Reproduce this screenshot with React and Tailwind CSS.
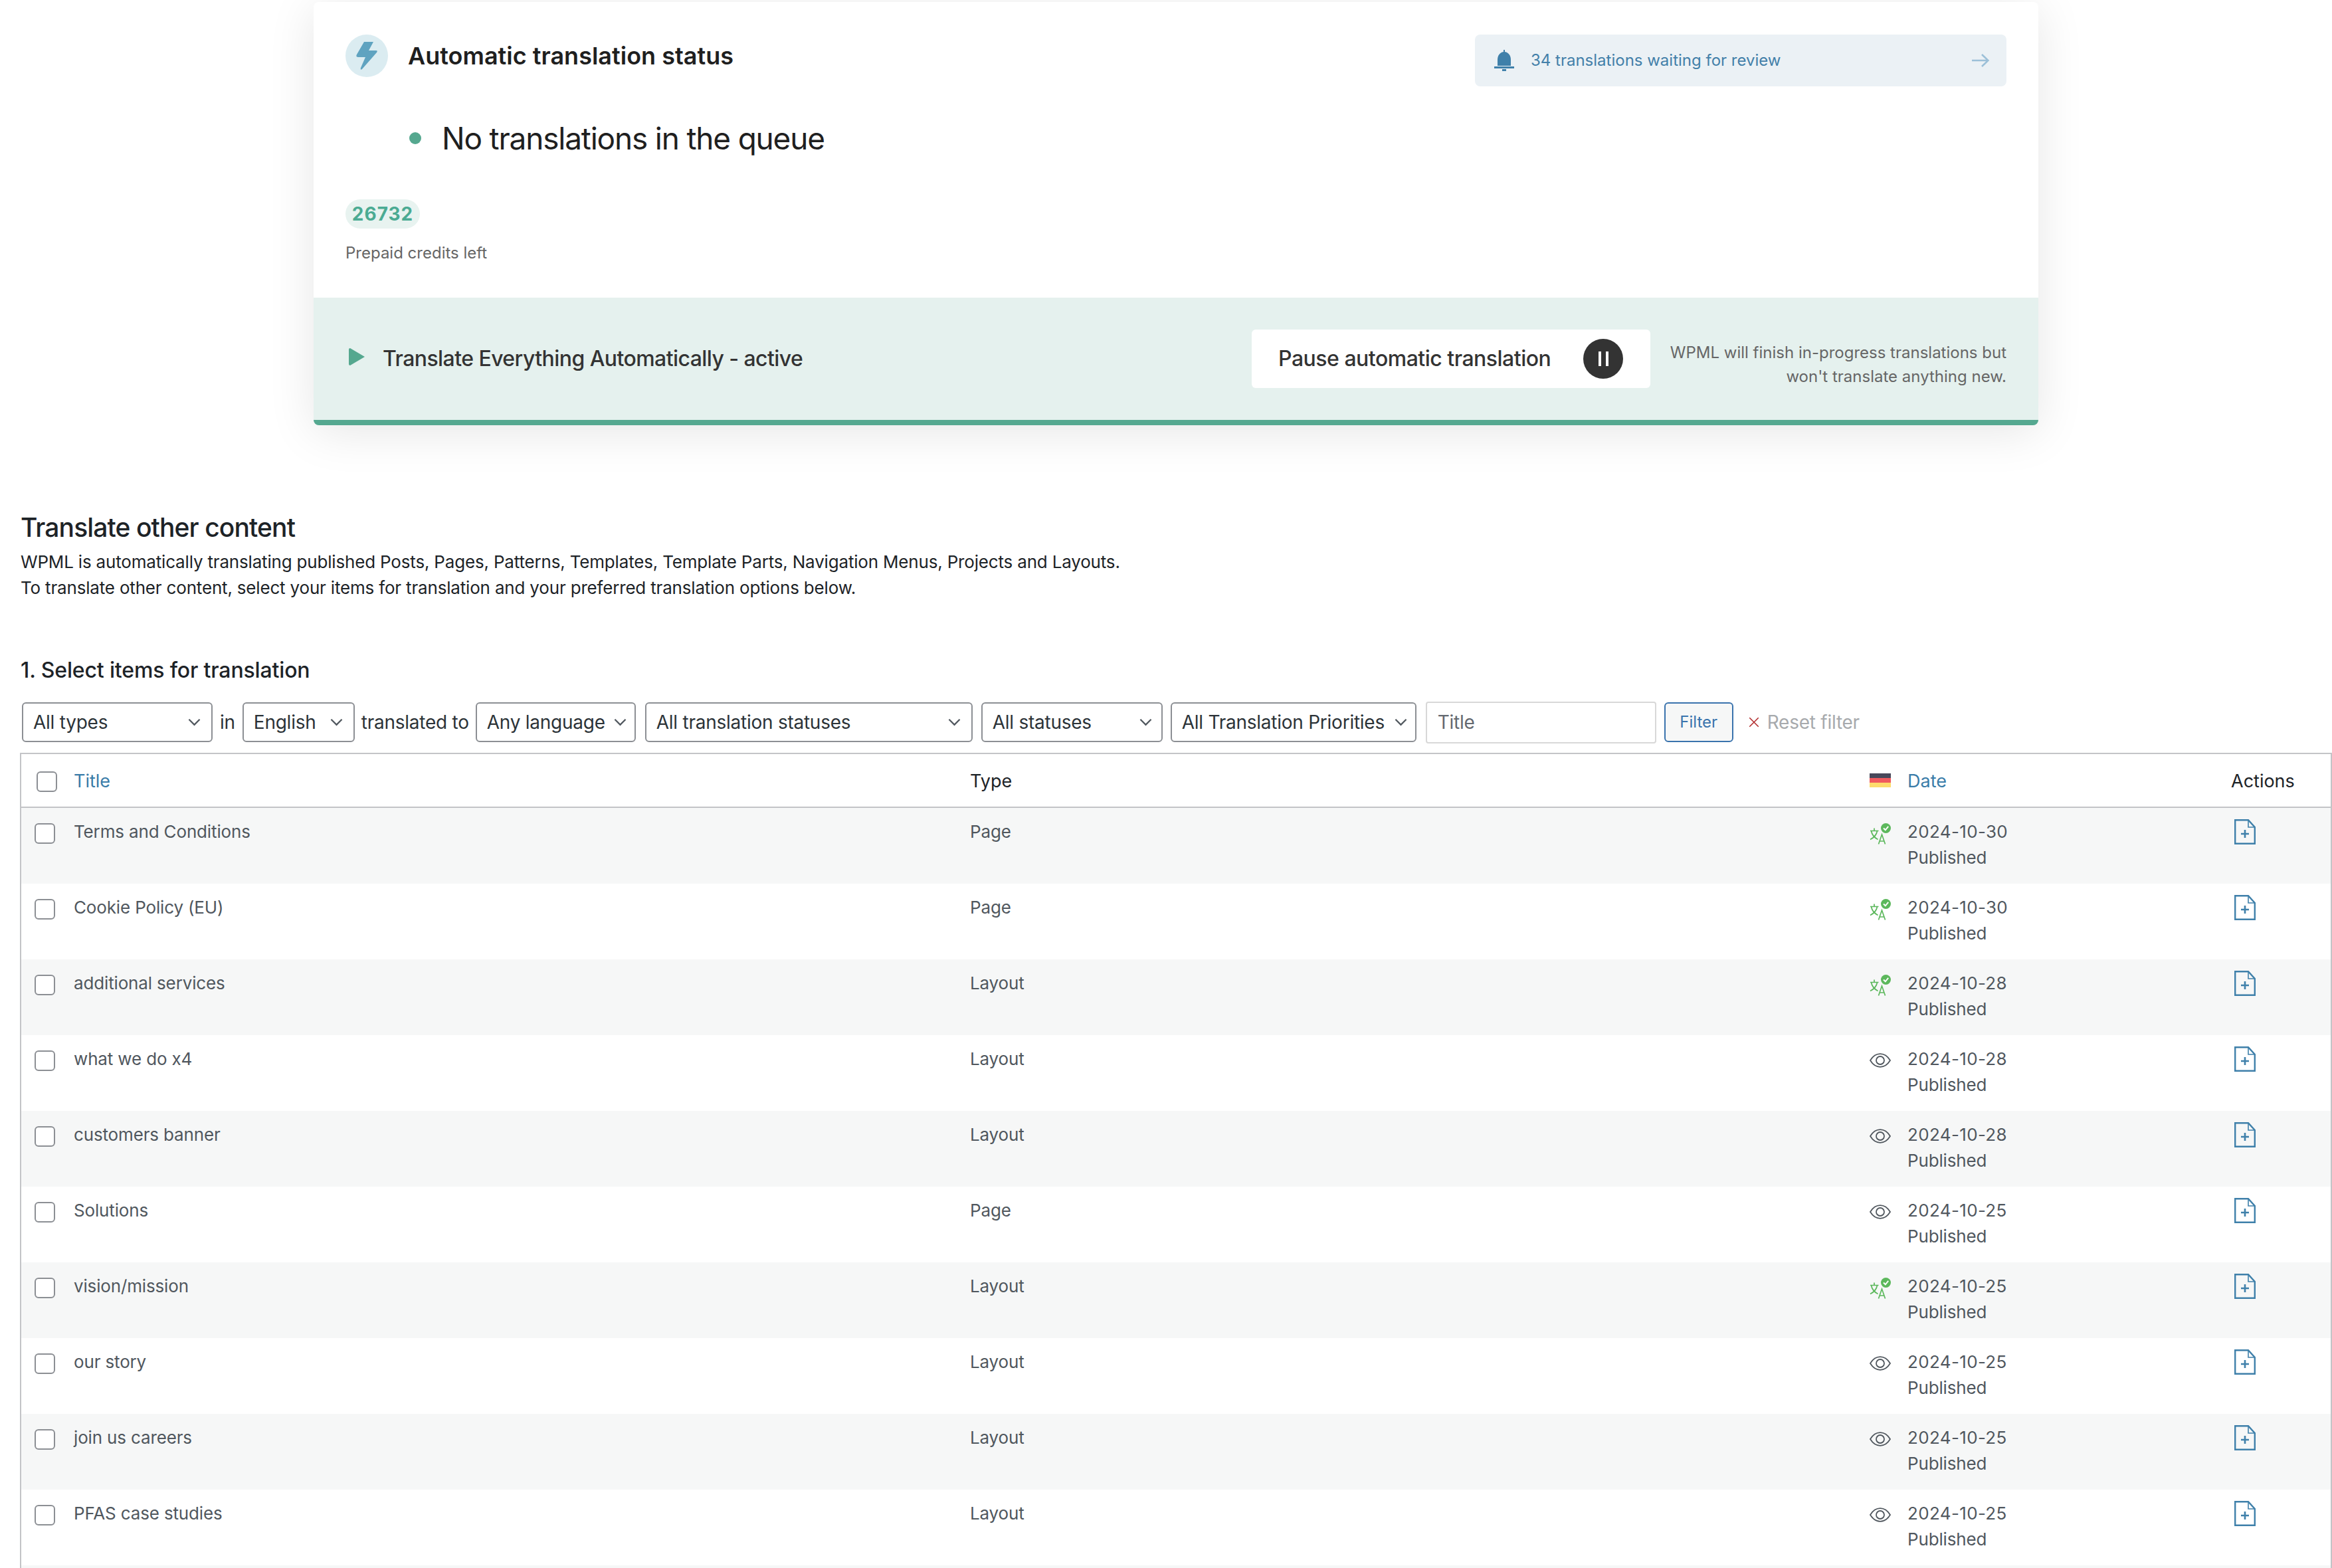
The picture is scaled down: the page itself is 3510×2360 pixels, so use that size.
import React from 'react';

const rows = [
  { title: 'Terms and Conditions', type: 'Page', date: '2024-10-30', status: 'done' },
  { title: 'Cookie Policy (EU)', type: 'Page', date: '2024-10-30', status: 'done' },
  { title: 'additional services', type: 'Layout', date: '2024-10-28', status: 'done' },
  { title: 'what we do x4', type: 'Layout', date: '2024-10-28', status: 'review' },
  { title: 'customers banner', type: 'Layout', date: '2024-10-28', status: 'review' },
  { title: 'Solutions', type: 'Page', date: '2024-10-25', status: 'review' },
  { title: 'vision/mission', type: 'Layout', date: '2024-10-25', status: 'done' },
  { title: 'our story', type: 'Layout', date: '2024-10-25', status: 'review' },
  { title: 'join us careers', type: 'Layout', date: '2024-10-25', status: 'review' },
  { title: 'PFAS case studies', type: 'Layout', date: '2024-10-25', status: 'review' },
];

const Chevron = () => (
  <svg viewBox="0 0 20 12" className="w-[19px] h-[12px] shrink-0" fill="none" stroke="#50575e" strokeWidth="2.4">
    <path d="M1.5 1.5 L10 10 L18.5 1.5" />
  </svg>
);

const Select = ({ label, className }) => (
  <div className={`h-[60px] flex items-center justify-between shrink-0 bg-white border-2 border-[#8c8f94] rounded-[6px] pl-[15px] text-[28px] tracking-[-0.25px] text-[#2c3338] ${className}`}>
    <span>{label}</span>
    <Chevron />
  </div>
);

const Checkbox = ({ className }) => (
  <div className={`w-[31px] h-[31px] bg-white border-2 border-[#8c8f94] rounded-[6px] ${className}`} />
);

const TranslatedIcon = () => (
  <svg viewBox="0 0 32 32" className="w-[32px] h-[32px]" fill="none" stroke="#5cb85c" strokeWidth="1.7">
    <path d="M1 11.500h12.500M7 7.500v4M2.500 11.500c1 6 4.500 10 10 13M11.500 11.500c-1 6-4.500 10-10.500 13" />
    <path d="M13.500 31.500 L18.500 17 L23.500 31.500 M15 27h7" />
    <circle cx="24.500" cy="7.500" r="7.500" fill="#5cb85c" stroke="none" />
    <path d="M21 7.500 L23.800 10.300 L28.200 4.900" stroke="#fff" strokeWidth="2" />
  </svg>
);

const EyeIcon = () => (
  <svg viewBox="0 0 32 22" className="w-[32px] h-[22px]" fill="none" stroke="#50575e" strokeWidth="1.8">
    <path d="M1 11 C5 4.500 10 1.200 16 1.200 S27 4.500 31 11 C27 17.500 22 20.800 16 20.800 S5 17.500 1 11 Z" />
    <circle cx="16" cy="11" r="6" />
  </svg>
);

const DocIcon = () => (
  <svg viewBox="0 0 32 38" className="w-[32px] h-[38px]" fill="none" stroke="#3f80aa" strokeWidth="2.4">
    <path d="M1.200 1.200 H21 L30.800 12 V36.800 H1.200 Z" />
    <path d="M21 1.200 V12 H30.800" strokeWidth="1.6" />
    <path d="M16 16 V28 M10 22 H22" strokeWidth="2.600" />
  </svg>
);

const GRID = 'grid grid-cols-[79px_1349px_1354px_57px_487px_1fr]';

const TableRow = ({ row, shaded }) => (
  <div className={`${GRID} h-[114px] pt-[16px] text-[26px] leading-[39px] tracking-[-0.15px] text-[#50575e] ${shaded ? 'bg-[#f6f7f7]' : 'bg-white'}`}>
    <div className="pl-[20px] pt-[7px]">
      <Checkbox />
    </div>
    <div>{row.title}</div>
    <div>{row.type}</div>
    <div className="flex items-start h-[39px]">
      {row.status === 'done' ? (
        <div className="mt-[7px]"><TranslatedIcon /></div>
      ) : (
        <div className="mt-[11px]"><EyeIcon /></div>
      )}
    </div>
    <div>
      <div className="tracking-[0.35px]">{row.date}</div>
      <div>Published</div>
    </div>
    <div className="pt-[1px] pl-[5px]">
      <DocIcon />
    </div>
  </div>
);

export default function App() {
  return (
    <div className="h-[2360px] overflow-hidden bg-white font-[Inter,sans-serif] text-[#1d2327]">
      <div className="pt-[3px] pl-[472px]">
        <div className="w-[2596px] h-[637px] rounded-[8px] overflow-hidden bg-white shadow-[0_10px_70px_rgba(0,0,0,0.1)] flex flex-col">
          <div className="h-[445px] shrink-0 px-[48px] pt-[49px]">
            <div className="flex justify-between items-start">
              <div className="flex items-center gap-[30px] h-[64px]">
                <div className="w-[64px] h-[64px] rounded-full bg-[#dbecf1] flex items-center justify-center">
                  <svg viewBox="0 0 32 42" className="w-[32px] h-[42px]" fill="#5fa3c0">
                    <path d="M12 0 H26 L19 13 H30 Q33 13 31 16 L9 41 Q6 43 7 39 L14 23 H3 Q-1 23 1 19 Z" />
                  </svg>
                </div>
                <div className="text-[36px] font-semibold text-[#1f1f1f]">Automatic translation status</div>
              </div>
              <div className="w-[800px] h-[78px] rounded-[8px] bg-[#ebf1f5] flex items-center pl-[29px] pr-[26px]">
                <svg viewBox="0 0 30 32" className="w-[30px] h-[32px] mr-[25px]" fill="#3f80aa">
                  <path d="M14 0h2v3c6 1 9 6 9 12v9H5v-9C5 9 8 4 14 3z" />
                  <rect x="0" y="25" width="30" height="3" />
                  <rect x="12" y="29" width="6" height="3" />
                </svg>
                <span className="text-[24px] text-[#4380a9] flex-1">34 translations waiting for review</span>
                <svg viewBox="0 0 26 20" className="w-[26px] h-[20px]" fill="none" stroke="#9cc0d8" strokeWidth="2.6">
                  <path d="M0 10 H24 M15 1 L24.500 10 L15 19" />
                </svg>
              </div>
            </div>
            <div className="flex items-center ml-[96px] mt-[46px] h-[64px]">
              <div className="w-[18px] h-[18px] rounded-full bg-[#55a88f] mr-[31px]" />
              <div className="text-[46px] text-[#1f1f1f] tracking-[-1.2px]">No translations in the queue</div>
            </div>
            <div className="mt-[60px] w-[112px] h-[44px] rounded-full bg-[#e8f3f0] flex items-center justify-center text-[28px] font-bold text-[#4bab93] tracking-[1px]">26732</div>
            <div className="mt-[19px] text-[24px] leading-[36px] text-[#666666]">Prepaid credits left</div>
          </div>
          <div className="flex-1 bg-[#e5f1ee] border-b-[8px] border-[#55a890] flex items-center pl-[53px] pr-[48px]">
            <svg viewBox="0 0 24 26" className="w-[24px] h-[26px] mr-[27px] mb-[6px] shrink-0" fill="#55a88f">
              <path d="M2 0 L24 13 L2 26 Q0 26 0 24 V2 Q0 0 2 0 Z" />
            </svg>
            <div className="text-[32px] font-medium tracking-[-0.57px] text-[#333333] w-[1308px]">Translate Everything Automatically - active</div>
            <div className="w-[600px] h-[88px] shrink-0 bg-white rounded-[6px] flex items-center justify-between pl-[40px] pr-[41px]">
              <span className="text-[32px] font-medium tracking-[-0.5px] text-[#333333]">Pause automatic translation</span>
              <div className="w-[60px] h-[60px] rounded-full bg-[#333333] flex items-center justify-center gap-[7px]">
                <div className="w-[4px] h-[22px] bg-white" />
                <div className="w-[4px] h-[22px] bg-white" />
              </div>
            </div>
            <div className="flex-1 text-right text-[24px] leading-[36px] text-[#666666] mt-[18px]">
              WPML will finish in-progress translations but won't translate anything new.
            </div>
          </div>
        </div>
      </div>

      <div className="pl-[31px] pt-[130px]">
        <h2 className="text-[39px] leading-[48px] font-medium tracking-[-0.9px] text-[#1d2327]">Translate other content</h2>
        <p className="mt-[8px] text-[26px] leading-[39px] tracking-[-0.18px] text-[#1d2327]">
          WPML is automatically translating published Posts, Pages, Patterns, Templates, Template Parts, Navigation Menus, Projects and Layouts.
          <br />
          To translate other content, select your items for translation and your preferred translation options below.
        </p>
        <h3 className="mt-[85px] text-[32px] leading-[40px] font-medium tracking-[-0.15px] text-[#1d2327]">1. Select items for translation</h3>
        <div className="mt-[28px] ml-[2px] flex items-center h-[60px] text-[28px] tracking-[-0.25px]">
          <Select label="All types" className="w-[287px] pr-[16px]" />
          <span className="ml-[11px] mr-[11px] text-[#2c3338]">in</span>
          <Select label="English" className="w-[169px] pr-[16px]" />
          <span className="ml-[10px] mr-[10px] text-[#2c3338]">translated to</span>
          <Select label="Any language" className="w-[241px] pr-[12px]" />
          <Select label="All translation statuses" className="w-[493px] ml-[14px] pr-[16px]" />
          <Select label="All statuses" className="w-[273px] ml-[13px] pr-[14px]" />
          <Select label="All Translation Priorities" className="w-[370px] ml-[12px] pr-[12px]" />
          <div className="w-[347px] h-[63px] ml-[14px] shrink-0 bg-white border-2 border-[#d8d8d8] rounded-[4px] flex items-center pl-[16px] text-[#646970]">Title</div>
          <div className="w-[104px] h-[60px] ml-[12px] shrink-0 bg-[#f6f7f7] border-2 border-[#3a73ad] rounded-[6px] flex items-center justify-center text-[24px] tracking-normal text-[#3a74ad]">Filter</div>
          <div className="ml-[22px] flex items-center text-[#a7aaad]">
            <svg viewBox="0 0 16 16" className="w-[18px] h-[18px] mr-[11px]" fill="none" stroke="#b32d2e" strokeWidth="1.4">
              <path d="M2 2 L14 14 M14 2 L2 14" />
            </svg>
            Reset filter
          </div>
        </div>
      </div>

      <div className="mt-[16px] ml-[30px] border-2 border-[#c3c4c7] border-b-0">
        <div className={`${GRID} h-[81px] pt-[3px] items-center border-b-[2px] border-[#c3c4c7] text-[27px] text-[#1d2327]`}>
          <div className="pl-[23px]">
            <Checkbox />
          </div>
          <div className="text-[#3a7ca8]">Title</div>
          <div>Type</div>
          <div className="flex flex-col w-[32px] h-[21px] -mt-[3px]">
            <div className="flex-1 bg-[#48485a]" />
            <div className="flex-1 bg-[#f05a5e]" />
            <div className="flex-1 bg-[#fddc6c]" />
          </div>
          <div className="text-[#3a7ca8]">Date</div>
          <div>Actions</div>
        </div>
        {rows.map((row, i) => (
          <TableRow key={row.title} row={row} shaded={i % 2 === 0} />
        ))}
        <div className="h-[114px] bg-[#f6f7f7]" />
      </div>
    </div>
  );
}
